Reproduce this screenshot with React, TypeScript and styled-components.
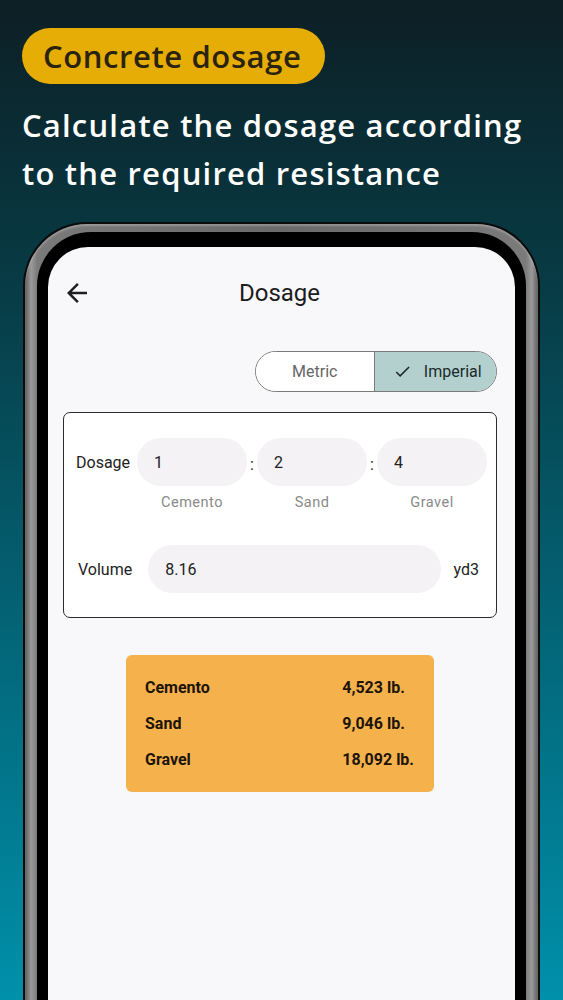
import React from "react";
import styled, { createGlobalStyle } from "styled-components";

//////////////////////// GLOBAL ////////////////////////

const GlobalStyle = createGlobalStyle`
  * { box-sizing: border-box; }
  html, body { margin: 0; padding: 0; }
  body { font-family: Roboto, "Liberation Sans", sans-serif; }
`;

//////////////////////// PAGE ////////////////////////

const Page = styled.div`
  height: 1000px;
  overflow: hidden;
  display: flex;
  flex-direction: column;
  padding-top: 28px;
  background: linear-gradient(180deg, #0d1f25 0%, #073d47 30%, #03677a 65%, #0090aa 100%);
`;

const Hero = styled.div`
  display: flex;
  flex-direction: column;
  align-items: flex-start;
  padding: 0 22px;
  font-family: "Open Sans", Lato, sans-serif;
`;

const Badge = styled.div`
  height: 56px;
  line-height: 56px;
  padding: 0 24px 0 21px;
  border-radius: 28px;
  background: #e6ad06;
  color: #2a230f;
  font-size: 31px;
  font-weight: 600;
  letter-spacing: 0.6px;
`;

const Headline = styled.h1`
  margin: 17px 0 0;
  color: #ffffff;
  font-size: 31px;
  line-height: 48px;
  font-weight: 600;
  letter-spacing: 1.2px;
`;

//////////////////////// PHONE ////////////////////////

const Frame = styled.div`
  flex: 1;
  display: flex;
  margin: 25px 23px 0;
  padding: 2px 2px 0;
  background: #0b0b0b;
  border-radius: 64px 64px 0 0;
`;

const Rim = styled.div`
  flex: 1;
  display: flex;
  padding: 8px 12px 0;
  border-radius: 62px 62px 0 0;
  background: linear-gradient(90deg, #5c5c5c 0%, #9a9a9a 1.2%, #7a7a7a 2.4%, #6a6a6a 50%, #7a7a7a 97.6%, #9a9a9a 98.8%, #5c5c5c 100%);
  box-shadow: inset 0 2px 2px rgba(255, 255, 255, 0.25);
`;

const Bezel = styled.div`
  flex: 1;
  display: flex;
  padding: 15px 11px 0;
  background: #000;
  border-radius: 54px 54px 0 0;
`;

const Screen = styled.div`
  flex: 1;
  display: flex;
  flex-direction: column;
  padding: 0 18px 0 15px;
  background: #f8f7fa;
  border-radius: 40px 40px 0 0;
  overflow: hidden;
  color: #1f1f1f;
`;

//////////////////////// HEADER ////////////////////////

const Header = styled.div`
  display: grid;
  grid-template-columns: 1fr auto 1fr;
  align-items: center;
  height: 48px;
  margin: 22px 0 0 -1px;
`;

const BackButton = styled.div`
  display: flex;
  align-items: center;
  color: #1f1f1f;
`;

const Title = styled.div`
  font-size: 24px;
  color: #1c1c1c;
`;

//////////////////////// SEGMENTED ////////////////////////

const Segmented = styled.div`
  align-self: flex-end;
  display: flex;
  width: 242px;
  height: 41px;
  margin-top: 34px;
  border: 1px solid #7b7b7b;
  border-radius: 21px;
  overflow: hidden;
`;

const Segment = styled.div<{ $active?: boolean }>`
  flex: 1;
  display: flex;
  align-items: center;
  justify-content: center;
  gap: 12px;
  font-size: 16px;
  background: ${(p) => (p.$active ? "#b3d0cf" : "#ffffff")};
  color: ${(p) => (p.$active ? "#1b2a2a" : "#666666")};
  border-left: ${(p) => (p.$active ? "1px solid #7b7b7b" : "none")};
  padding-left: ${(p) => (p.$active ? "4px" : "0")};
`;

//////////////////////// FORM CARD ////////////////////////

const Card = styled.div`
  margin-top: 20px;
  padding: 25px 9px 24px 12px;
  background: #ffffff;
  border: 1.5px solid #2b2b2b;
  border-radius: 7px;
`;

const DosageGrid = styled.div`
  display: grid;
  grid-template-columns: 61px 1fr 10px 1fr 10px 1fr;
  row-gap: 7px;
  align-items: center;
`;

const Label = styled.div<{ $indent?: number }>`
  font-size: 16px;
  color: #222;
  padding-left: ${(p) => p.$indent || 0}px;
`;

const Field = styled.div`
  height: 48px;
  display: flex;
  align-items: center;
  padding-left: 17px;
  border-radius: 24px;
  background: #f4f2f5;
  font-size: 16px;
  color: #222;
`;

const Colon = styled.div`
  text-align: center;
  font-size: 16px;
  color: #222;
  padding-top: 4px;
`;

const SubLabel = styled.div`
  text-align: center;
  font-size: 14.5px;
  letter-spacing: 0.5px;
  color: #8a8a8a;
  line-height: 20px;
`;

const VolumeRow = styled.div`
  display: flex;
  align-items: center;
  gap: 13px;
  margin-top: 32px;
`;

const VolumeLabel = styled(Label)`
  margin-right: 3px;
`;

const VolumeField = styled(Field)`
  flex: 1;
`;

const Unit = styled.div`
  font-size: 16px;
  color: #222;
  margin-right: 8px;
`;

//////////////////////// RESULT ////////////////////////

const Result = styled.div`
  align-self: center;
  width: 308px;
  margin-top: 37px;
  padding: 21px 20px 20px 19px;
  display: grid;
  grid-template-columns: 1fr auto;
  row-gap: 12px;
  line-height: 24px;
  background: #f5b14c;
  border-radius: 6px;
  font-size: 16px;
  font-weight: 700;
  color: #1d1409;
`;

//////////////////////// DATA ////////////////////////

const ratio = [
  { value: "1", name: "Cemento" },
  { value: "2", name: "Sand" },
  { value: "4", name: "Gravel" },
];

const results = [
  { name: "Cemento", amount: "4,523 lb." },
  { name: "Sand", amount: "9,046 lb." },
  { name: "Gravel", amount: "18,092 lb." },
];

//////////////////////// COMPONENT ////////////////////////

const App = () => {
  return (
    <>
      <GlobalStyle />
      <Page>
        <Hero>
          <Badge>Concrete dosage</Badge>
          <Headline>
            Calculate the dosage according
            <br />
            to the required resistance
          </Headline>
        </Hero>

        <Frame>
          <Rim>
            <Bezel>
              <Screen>
                <Header>
                  <BackButton>
                    <svg width="30" height="30" viewBox="0 0 24 24" fill="currentColor">
                      <path d="M20 11H7.83l5.59-5.59L12 4l-8 8 8 8 1.41-1.41L7.83 13H20v-2z" />
                    </svg>
                  </BackButton>
                  <Title>Dosage</Title>
                  <div />
                </Header>

                <Segmented>
                  <Segment>Metric</Segment>
                  <Segment $active>
                    <svg width="19" height="19" viewBox="0 0 24 24" fill="currentColor">
                      <path d="M9 16.17 4.83 12l-1.42 1.41L9 19 21 7l-1.41-1.41z" />
                    </svg>
                    Imperial
                  </Segment>
                </Segmented>

                <Card>
                  <DosageGrid>
                    <Label>Dosage</Label>
                    {ratio.map((r, i) => (
                      <React.Fragment key={r.name}>
                        <Field>{r.value}</Field>
                        {i < ratio.length - 1 && <Colon>:</Colon>}
                      </React.Fragment>
                    ))}
                    <div />
                    {ratio.map((r, i) => (
                      <React.Fragment key={r.name}>
                        <SubLabel>{r.name}</SubLabel>
                        {i < ratio.length - 1 && <div />}
                      </React.Fragment>
                    ))}
                  </DosageGrid>

                  <VolumeRow>
                    <VolumeLabel $indent={2}>Volume</VolumeLabel>
                    <VolumeField>8.16</VolumeField>
                    <Unit>yd3</Unit>
                  </VolumeRow>
                </Card>

                <Result>
                  {results.map((r) => (
                    <React.Fragment key={r.name}>
                      <div>{r.name}</div>
                      <div>{r.amount}</div>
                    </React.Fragment>
                  ))}
                </Result>
              </Screen>
            </Bezel>
          </Rim>
        </Frame>
      </Page>
    </>
  );
};

export default App;
